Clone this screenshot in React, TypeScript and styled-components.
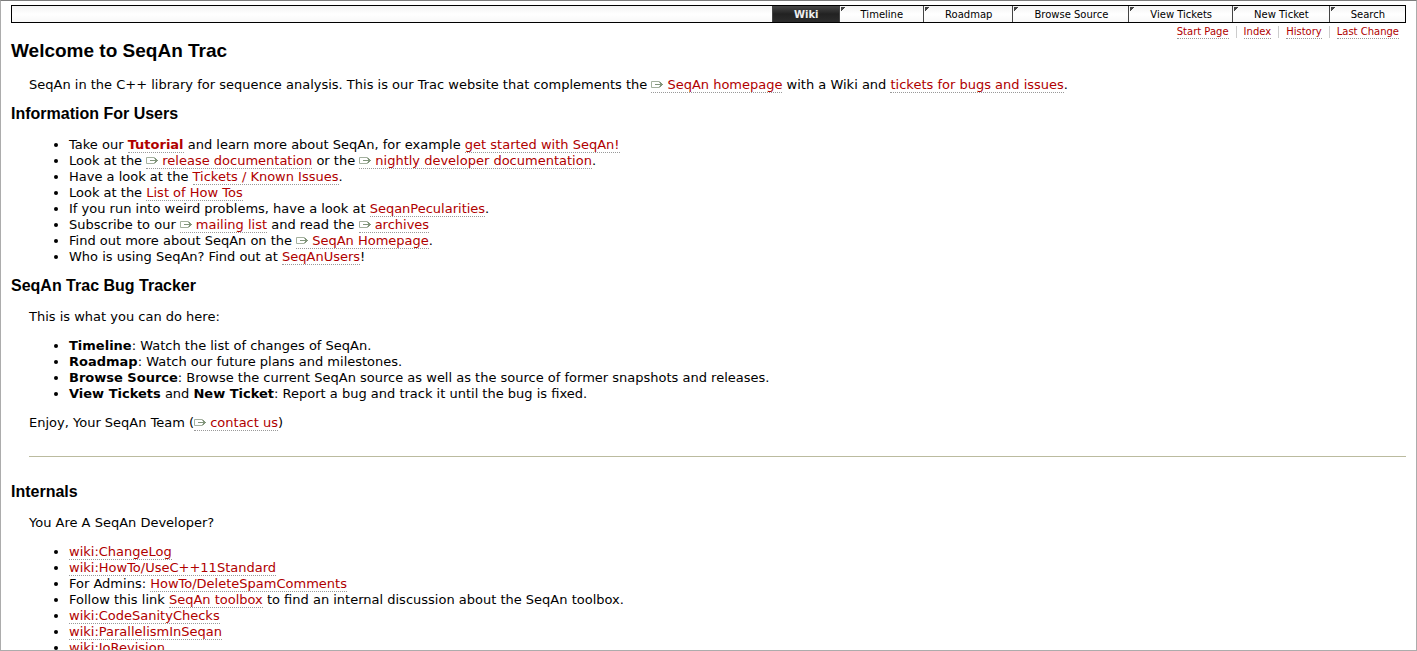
import React from "react";
import styled, { createGlobalStyle } from "styled-components";

const GlobalStyle = createGlobalStyle`
  * { box-sizing: border-box; }
  body {
    margin: 0;
    background: #fff;
    color: #000;
    font: 13px/16px Verdana, "DejaVu Sans", sans-serif;
  }
`;

const Window = styled.div`
  height: 100vh;
  overflow: auto;
  scrollbar-width: none;
  padding: 4px 10px 0;
  border: 1px solid #acacac;
  border-top-color: #7c7c7c;
`;

const MainNav = styled.nav`
  display: flex;
  justify-content: flex-end;
  height: 18px;
  border: 1px solid #000;
  background: linear-gradient(#f3f3f3, #fff 50%, #f8f8f8);
`;

const Tab = styled.a<{ $active?: boolean }>`
  position: relative;
  padding: 0 20px 0 21px;
  border-left: 1px solid #444;
  color: ${(p) => (p.$active ? "#eee" : "#000")};
  background: ${(p) => (p.$active ? "linear-gradient(#484848, #222 50%, #2c2c2c)" : "none")};
  font-size: 10px;
  font-weight: ${(p) => (p.$active ? "bold" : "normal")};
  line-height: 17px;
  text-decoration: none;
  white-space: nowrap;
`;

const Corner = styled.svg`
  position: absolute;
  top: 1px;
  left: 1px;
`;

const ContextNav = styled.nav`
  display: flex;
  justify-content: flex-end;
  padding: 3px 7px 0 0;
`;

const ContextItem = styled.span`
  display: flex;
  font-size: 10px;
  line-height: 12px;
  & + & {
    margin-left: 7px;
    padding-left: 8px;
    background: linear-gradient(#ccc, #ccc) 0 0 / 1px 12px no-repeat;
  }
`;

const Link = styled.a`
  color: #b00000;
  text-decoration: none;
  border-bottom: 1px dotted #999;
`;

const ExternalIcon = styled.svg`
  margin-right: 3px;
`;

const Title = styled.h1`
  margin: 0 0 14px;
  font: bold 19px/24px Arial, "Liberation Sans", sans-serif;
`;

const Heading = styled.h2`
  margin: 11px 0 13px;
  font: bold 16px/20px Arial, "Liberation Sans", sans-serif;
`;

const Paragraph = styled.p`
  margin: 13px 18px;
`;

const Intro = styled(Paragraph)`
  margin-bottom: 11px;
`;

const List = styled.ul`
  margin: 0 0 11px 18px;
  padding-left: 40px;
`;

const Rule = styled.hr`
  margin: 25px 0 25px 18px;
  border: 0;
  border-top: 1px solid #bbbb9f;
`;

function External({ href, children }: { href: string; children: React.ReactNode }) {
  return (
    <Link href={href}>
      <ExternalIcon width="13" height="8" viewBox="0 0 13 8" fill="none" aria-hidden="true">
        <path d="M8.500 2V.5H.5v6h8V5" stroke="#a3b09e" />
        <path d="M4 3.500h8" stroke="#81957b" />
        <path d="M9.500 1v5M10.500 2v3M11.500 3v1" stroke="#81957b" />
      </ExternalIcon>
      {children}
    </Link>
  );
}

const tabs = ["Wiki", "Timeline", "Roadmap", "Browse Source", "View Tickets", "New Ticket", "Search"];
const contextLinks = ["Start Page", "Index", "History", "Last Change"];

export default function App() {
  return (
    <Window>
      <GlobalStyle />
      <MainNav aria-label="Main">
        {tabs.map((name, i) => (
          <Tab key={name} href="#" $active={i === 0}>
            {i > 0 && (
              <Corner width="4" height="4" aria-hidden="true">
                <path d="M0 0h4v1H3v1H2v1H1v1H0z" fill="#444" />
              </Corner>
            )}
            {name}
          </Tab>
        ))}
      </MainNav>
      <ContextNav aria-label="Context">
        {contextLinks.map((name) => (
          <ContextItem key={name}>
            <Link href="#">{name}</Link>
          </ContextItem>
        ))}
      </ContextNav>
      <main>
        <Title>Welcome to SeqAn Trac</Title>
        <Intro>
          SeqAn in the C++ library for sequence analysis. This is our Trac website that complements the{" "}
          <External href="#">SeqAn homepage</External> with a Wiki and{" "}
          <Link href="#">tickets for bugs and issues</Link>.
        </Intro>
        <Heading>Information For Users</Heading>
        <List>
          <li>
            Take our <Link href="#"><strong>Tutorial</strong></Link> and learn more about SeqAn, for example{" "}
            <Link href="#">get started with SeqAn!</Link>
          </li>
          <li>
            Look at the <External href="#">release documentation</External> or the{" "}
            <External href="#">nightly developer documentation</External>.
          </li>
          <li>Have a look at the <Link href="#">Tickets / Known Issues</Link>.</li>
          <li>Look at the <Link href="#">List of How Tos</Link></li>
          <li>If you run into weird problems, have a look at <Link href="#">SeqanPecularities</Link>.</li>
          <li>
            Subscribe to our <External href="#">mailing list</External> and read the{" "}
            <External href="#">archives</External>
          </li>
          <li>Find out more about SeqAn on the <External href="#">SeqAn Homepage</External>.</li>
          <li>Who is using SeqAn? Find out at <Link href="#">SeqAnUsers</Link>!</li>
        </List>
        <Heading>SeqAn Trac Bug Tracker</Heading>
        <Paragraph>This is what you can do here:</Paragraph>
        <List>
          <li><strong>Timeline</strong>: Watch the list of changes of SeqAn.</li>
          <li><strong>Roadmap</strong>: Watch our future plans and milestones.</li>
          <li>
            <strong>Browse Source</strong>: Browse the current SeqAn source as well as the source of former
            snapshots and releases.
          </li>
          <li>
            <strong>View Tickets</strong> and <strong>New Ticket</strong>: Report a bug and track it until the
            bug is fixed.
          </li>
        </List>
        <Paragraph>Enjoy, Your SeqAn Team (<External href="#">contact us</External>)</Paragraph>
        <Rule />
        <Heading>Internals</Heading>
        <Paragraph>You Are A SeqAn Developer?</Paragraph>
        <List>
          <li><Link href="#">wiki:ChangeLog</Link></li>
          <li><Link href="#">wiki:HowTo/UseC++11Standard</Link></li>
          <li>For Admins: <Link href="#">HowTo/DeleteSpamComments</Link></li>
          <li>
            Follow this link <Link href="#">SeqAn toolbox</Link> to find an internal discussion about the SeqAn
            toolbox.
          </li>
          <li><Link href="#">wiki:CodeSanityChecks</Link></li>
          <li><Link href="#">wiki:ParallelismInSeqan</Link></li>
          <li><Link href="#">wiki:IoRevision</Link></li>
        </List>
      </main>
    </Window>
  );
}
